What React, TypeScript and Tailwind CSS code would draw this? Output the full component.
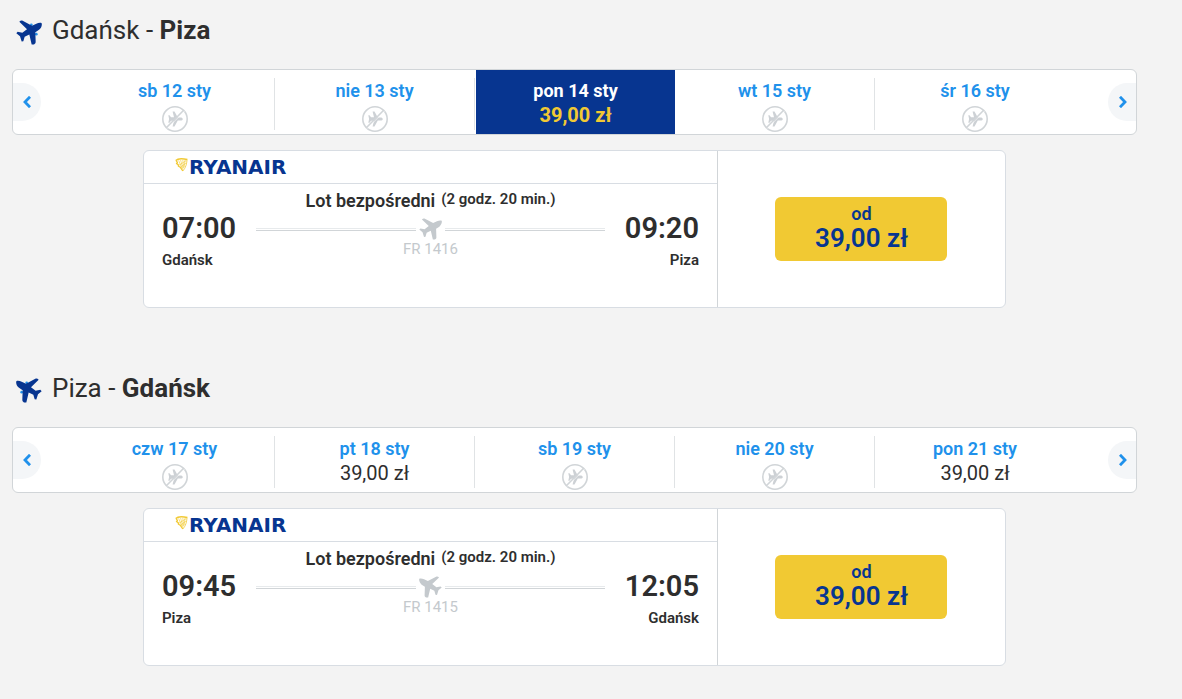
interface DayOption {
  label: string;
  price?: string;
  selected?: boolean;
}

interface Flight {
  from: string;
  to: string;
  departure: string;
  arrival: string;
  duration: string;
  number: string;
  price: string;
  inbound?: boolean;
  days: DayOption[];
}

const FLIGHTS: Flight[] = [
  {
    from: "Gdańsk",
    to: "Piza",
    departure: "07:00",
    arrival: "09:20",
    duration: "(2 godz. 20 min.)",
    number: "FR 1416",
    price: "39,00 zł",
    days: [
      { label: "sb 12 sty" },
      { label: "nie 13 sty" },
      { label: "pon 14 sty", price: "39,00 zł", selected: true },
      { label: "wt 15 sty" },
      { label: "śr 16 sty" },
    ],
  },
  {
    from: "Piza",
    to: "Gdańsk",
    departure: "09:45",
    arrival: "12:05",
    duration: "(2 godz. 20 min.)",
    number: "FR 1415",
    price: "39,00 zł",
    inbound: true,
    days: [
      { label: "czw 17 sty" },
      { label: "pt 18 sty", price: "39,00 zł" },
      { label: "sb 19 sty" },
      { label: "nie 20 sty" },
      { label: "pon 21 sty", price: "39,00 zł" },
    ],
  },
];

function Plane({ className, engines }: { className: string; engines?: boolean }) {
  return (
    <svg className={className} viewBox="2 3 78 74" fill="currentColor" aria-hidden="true">
      {engines && (
        <g fill="#2091eb">
          <circle cx="48" cy="17" r="4" />
          <circle cx="63" cy="45" r="4" />
        </g>
      )}
      <path d="M79 12C76 10 68 11 63 14L50 20L22 5C19 3 15 4 12 8L35 30L21 41L7 38L3 42L14 51L19 67L24 66L28 53L42 46L49 76L56 76C60 74 61 71 61 68L60 39L71 32C77 27 81 19 79 12Z" />
    </svg>
  );
}

function NoFlight() {
  return (
    <svg className="w-[26px] h-[26px] mt-[3px]" viewBox="0 0 26 26" role="img" aria-label="Brak lotów">
      <circle cx="13" cy="13" r="12.2" fill="none" stroke="#d1d5d8" strokeWidth="1.6" />
      <path
        fill="#cdd1d5"
        d="M20.8 13c0-1-1.2-1.6-2.2-1.6h-2.8L12.5 5.6h-1.9l1.4 5.7H9L7.5 9.2H6.3l.8 3.8-.8 3.8h1.2L9 14.7h3l-1.4 5.7h1.9l3.3-5.8h2.8c1 0 2.2-.6 2.2-1.6z"
      />
      <path d="M5 22.6L22.4 5.2" stroke="#fff" strokeWidth=".7" />
      <path d="M4.3 21.7L21.7 4.3" stroke="#d1d5d8" strokeWidth="1.6" />
    </svg>
  );
}

function Chevron({ className }: { className?: string }) {
  return (
    <svg className={className} width="9" height="12" viewBox="0 0 9 12" fill="none" aria-hidden="true">
      <path d="M7 .8L2 6L7 11.2" stroke="#2091eb" strokeWidth="2.8" />
    </svg>
  );
}

function RyanairLogo() {
  return (
    <div className="flex items-center h-8 pl-[31px]">
      <svg className="w-[13px] h-[14px] mb-1" viewBox="0 0 13 14" fill="none" stroke="#f1c933" aria-hidden="true">
        <path d="M.8 2.6C2.6.6 8 .6 12.4 1.6" strokeWidth="1.5" />
        <path d="M1 2.4L2.4 4.4L1.6 5.6L3.2 6.6L3.4 8.2L5.2 9.2L7.8 13" strokeWidth="1.3" />
        <path d="M12 1.8C11.8 6 10.6 10 7.8 13" strokeWidth=".8" />
        <path d="M3.6 2.4L7.4 11.4M5.6 2L8 10.8M7.8 2L8.6 10M10 2L9.2 9M4 7.2L11.2 2.6M5.6 9L11 5" strokeWidth=".6" />
      </svg>
      <span className="pl-px font-['DejaVu_Sans'] text-xl leading-[30px] font-bold text-[#073590]">RYANAIR</span>
    </div>
  );
}

function DayCell({ day, last }: { day: DayOption; last: boolean }) {
  return (
    <div className="flex min-w-0">
      <button
        type="button"
        aria-pressed={!!day.selected}
        className={`flex flex-1 flex-col items-center pt-[9px] leading-6 ${day.selected ? "bg-[#073590] ml-px" : ""}`}
      >
        <span className={`text-lg leading-6 ${day.selected ? "font-bold text-white" : "font-semibold text-[#2091eb]"}`}>
          {day.label}
        </span>
        {day.price ? (
          <span className={`text-xl leading-6 ${day.selected ? "font-bold text-[#f1c933]" : "text-[#2e2e2e]"}`}>
            {day.price}
          </span>
        ) : (
          <NoFlight />
        )}
      </button>
      {!last && !day.selected && <span className="w-px mt-2 mb-1 bg-[#e0e3e5]" />}
    </div>
  );
}

function DateBar({ days }: { days: DayOption[] }) {
  return (
    <div className="flex items-center h-[66px] bg-white border border-[#d1d5d8] rounded-md">
      <button
        type="button"
        aria-label="Poprzednie dni"
        className="flex items-center justify-center w-7 h-[38px] rounded-r-full bg-[#f4f6f8]"
      >
        <Chevron />
      </button>
      <div className="grid grid-cols-5 flex-1 self-stretch ml-[34px] mr-[33px]">
        {days.map((day, i) => (
          <DayCell key={day.label} day={day} last={i === days.length - 1} />
        ))}
      </div>
      <button
        type="button"
        aria-label="Następne dni"
        className="flex items-center justify-center w-7 h-[38px] rounded-l-full bg-[#f4f6f8]"
      >
        <Chevron className="rotate-180" />
      </button>
    </div>
  );
}

function FlightCard({ flight }: { flight: Flight }) {
  return (
    <div className="flex w-full max-w-[863px] h-[158px] mx-auto mt-[15px] bg-white border border-[#d8dde3] rounded-md">
      <div className="w-2/3 border-r border-[#d1d5d8]">
        <div className="border-b border-[#d8dde3]">
          <RyanairLogo />
        </div>
        <div className="flex px-[18px] pt-[5px] text-[#2e2e2e]">
          <div className="w-[94px] pt-[23px]">
            <div className="text-[29px] leading-8 font-semibold">{flight.departure}</div>
            <div className="mt-1.5 text-[15px] leading-5 font-semibold">{flight.from}</div>
          </div>
          <div className="flex-1">
            <div className="flex justify-center gap-1.5 font-semibold whitespace-nowrap">
              <span className="text-lg leading-6">Lot bezpośredni</span>
              <span className="text-[15px] leading-5">{flight.duration}</span>
            </div>
            <div className="flex items-center gap-[3px] mt-[5px] text-[#c4c9cd]">
              <span className="flex-1 h-[3px] border-y border-t-[#e7eaec] border-b-[#d1d5d8]" />
              <Plane className={`w-[23px] h-[22px] ${flight.inbound ? "-scale-x-100" : ""}`} />
              <span className="flex-1 h-[3px] border-y border-t-[#e7eaec] border-b-[#d1d5d8]" />
            </div>
            <div className="text-[15px] leading-[18px] text-center text-[#c4c9cd]">{flight.number}</div>
          </div>
          <div className="w-[94px] pt-[23px] text-right">
            <div className="text-[29px] leading-8 font-semibold">{flight.arrival}</div>
            <div className="mt-1.5 text-[15px] leading-5 font-semibold">{flight.to}</div>
          </div>
        </div>
      </div>
      <div className="flex flex-1 items-center justify-center">
        <button type="button" className="w-[172px] h-16 pb-0.5 rounded-md bg-[#f1c933] font-semibold text-[#073590]">
          <span className="block text-lg leading-5">od</span>
          <span className="block text-[26px] leading-7">{flight.price}</span>
        </button>
      </div>
    </div>
  );
}

function Journey({ flight }: { flight: Flight }) {
  return (
    <section className="h-[358px]">
      <h2 className="flex items-center gap-2.5 h-[69px] pb-2 pl-1 text-[26px] text-[#2e2e2e]">
        <Plane engines className={`w-[26px] h-[25px] mt-[3px] text-[#073590] ${flight.inbound ? "-scale-x-100" : ""}`} />
        <span>
          {flight.from} - <strong className="font-bold">{flight.to}</strong>
        </span>
      </h2>
      <DateBar days={flight.days} />
      <FlightCard flight={flight} />
    </section>
  );
}

export default function App() {
  return (
    <main className="min-h-screen pl-3 pr-[45px] bg-[#f3f3f3] font-[Roboto,sans-serif]">
      {FLIGHTS.map((flight) => (
        <Journey key={flight.number} flight={flight} />
      ))}
    </main>
  );
}
